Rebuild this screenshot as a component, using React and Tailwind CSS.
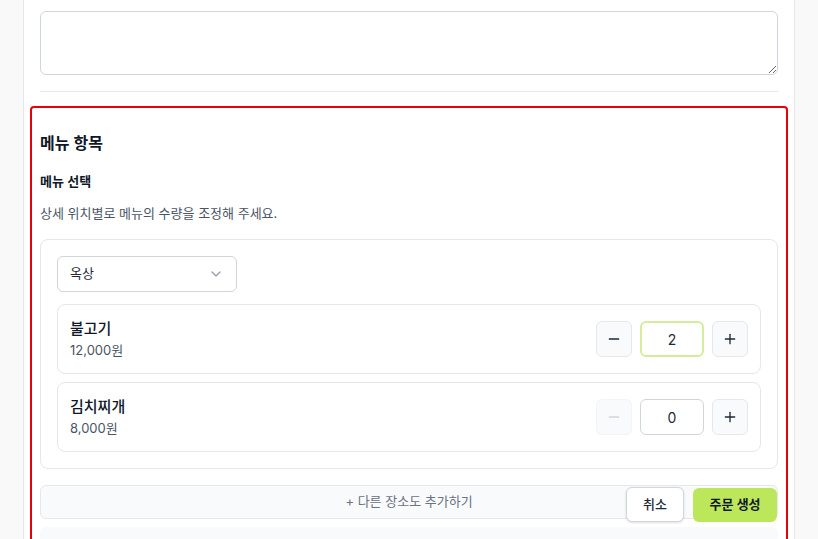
import { ChevronDown, Minus, Plus } from 'lucide-react'

const items = [
  { name: '불고기', price: '12,000원', qty: 2, active: true },
  { name: '김치찌개', price: '8,000원', qty: 0, active: false },
]

const QtyRow = ({ item }) => (
  <div className="flex items-center justify-between border border-gray-200 rounded-lg px-3 py-3 h-[70px]">
    <div className="flex flex-col">
      <span className="text-[15px] leading-[22px] font-medium text-gray-900">{item.name}</span>
      <span className="text-[13px] leading-[20px] text-gray-600">{item.price}</span>
    </div>
    <div className="flex items-center gap-2">
      <button
        type="button"
        disabled={item.qty === 0}
        className={
          item.qty === 0
            ? 'w-9 h-9 flex items-center justify-center rounded-md border border-gray-100 bg-gray-50 text-gray-300'
            : 'w-9 h-9 flex items-center justify-center rounded-md border border-gray-200 bg-gray-50 text-gray-800'
        }
      >
        <Minus size={16} strokeWidth={2} />
      </button>
      <div
        className={
          item.active
            ? 'w-16 h-9 flex items-center justify-center rounded-md border-2 border-[#d4ec9c] bg-white text-[14px] text-gray-800'
            : 'w-16 h-9 flex items-center justify-center rounded-md border border-gray-300 bg-white text-[14px] text-gray-800'
        }
      >
        {item.qty}
      </div>
      <button
        type="button"
        className="w-9 h-9 flex items-center justify-center rounded-md border border-gray-200 bg-gray-50 text-gray-800"
      >
        <Plus size={16} strokeWidth={2} />
      </button>
    </div>
  </div>
)

export default function App() {
  return (
    <div
      className="relative h-[539px] overflow-hidden bg-[#f8f9f8]"
      style={{ fontFamily: "Inter, 'Noto Sans CJK KR', sans-serif" }}
    >
      <div className="ml-[23px] w-[772px] h-full bg-white border-x border-gray-200 px-4 pt-[11px]">
        <textarea className="block w-full h-[64px] rounded-md border border-gray-300 bg-white resize-y" />
        <div className="mt-4 border-t border-gray-200" />

        <div className="-mx-[10px] mt-[14px] border-2 border-red-600 rounded-[4px] px-2 pt-[23px] pb-4">
          <h2 className="text-[16px] leading-6 font-semibold text-gray-900">메뉴 항목</h2>
          <h3 className="mt-4 text-[13px] leading-5 font-semibold text-gray-900">메뉴 선택</h3>
          <p className="mt-3 text-[13px] leading-5 text-gray-600">상세 위치별로 메뉴의 수량을 조정해 주세요.</p>

          <div className="mt-4 border border-gray-200 rounded-lg p-4">
            <div className="w-[180px] h-9 flex items-center justify-between rounded-md border border-gray-300 px-3 text-[13px] text-gray-800">
              <span>옥상</span>
              <ChevronDown size={16} className="text-gray-400" />
            </div>
            <div className="mt-3 flex flex-col gap-2">
              {items.map((item) => (
                <QtyRow key={item.name} item={item} />
              ))}
            </div>
          </div>

          <button
            type="button"
            className="mt-4 w-full h-[34px] rounded-md border border-gray-200 bg-gray-50 text-[13px] text-gray-500"
          >
            + 다른 장소도 추가하기
          </button>
          <div className="mt-2 h-10 rounded-md bg-gray-50" />
        </div>
      </div>

      <div className="absolute right-[41px] bottom-[17px] flex items-center gap-[9px]">
        <button
          type="button"
          className="w-[58px] h-[35px] rounded-md border border-gray-300 bg-white text-[13px] font-medium text-gray-800 shadow-sm"
        >
          취소
        </button>
        <button
          type="button"
          className="w-[84px] h-[34px] rounded-md bg-[#bde75a] text-[13px] font-semibold text-gray-900"
        >
          주문 생성
        </button>
      </div>
    </div>
  )
}
